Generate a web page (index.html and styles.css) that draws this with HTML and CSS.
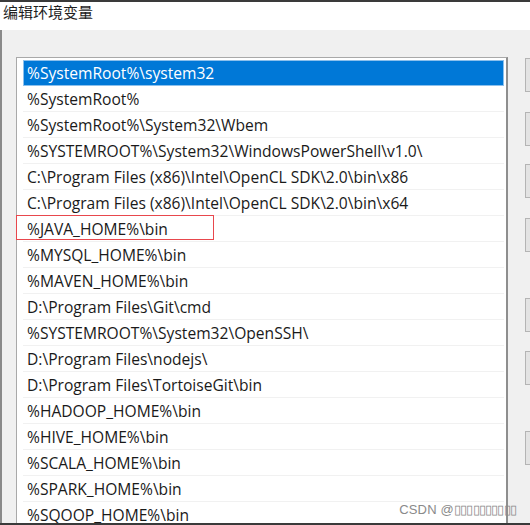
FILE: index.html
```html
<!DOCTYPE html>
<html>
<head>
<meta charset="utf-8">
<link rel="stylesheet" href="styles.css">
</head>
<body>
<div class="window">
  <div class="titlebar">编辑环境变量</div>
  <div class="content">
    <div class="listbox">
      <div class="row selected">%SystemRoot%\system32</div>
      <div class="row">%SystemRoot%</div>
      <div class="row">%SystemRoot%\System32\Wbem</div>
      <div class="row">%SYSTEMROOT%\System32\WindowsPowerShell\v1.0\</div>
      <div class="row">C:\Program Files (x86)\Intel\OpenCL SDK\2.0\bin\x86</div>
      <div class="row">C:\Program Files (x86)\Intel\OpenCL SDK\2.0\bin\x64</div>
      <div class="row marked">%JAVA_HOME%\bin</div>
      <div class="row">%MYSQL_HOME%\bin</div>
      <div class="row">%MAVEN_HOME%\bin</div>
      <div class="row">D:\Program Files\Git\cmd</div>
      <div class="row">%SYSTEMROOT%\System32\OpenSSH\</div>
      <div class="row">D:\Program Files\nodejs\</div>
      <div class="row">D:\Program Files\TortoiseGit\bin</div>
      <div class="row">%HADOOP_HOME%\bin</div>
      <div class="row">%HIVE_HOME%\bin</div>
      <div class="row">%SCALA_HOME%\bin</div>
      <div class="row">%SPARK_HOME%\bin</div>
      <div class="row">%SQOOP_HOME%\bin</div>
    </div>
    <div class="buttons">
      <div class="btn b1"></div>
      <div class="btn b2"></div>
      <div class="btn b3"></div>
      <div class="btn b4"></div>
      <div class="btn b5"></div>
      <div class="btn b6"></div>
      <div class="btn b7"></div>
    </div>
  </div>
  <div class="watermark">CSDN @<span class="tofu">▯▯▯▯▯▯▯▯▯▯</span></div>
</div>
</body>
</html>
```
FILE: styles.css
```css
html, body {
  margin: 0;
  padding: 0;
  width: 530px;
  height: 525px;
  overflow: hidden;
  background: #f0f0f0;
}
.window {
  position: relative;
  width: 530px;
  height: 525px;
  box-sizing: border-box;
  border-top: 2px solid #3a3a3a;
  border-bottom: 2px solid #3a3a3a;
  display: flex;
  flex-direction: column;
  overflow: hidden;
}
.titlebar {
  height: 28px;
  flex: none;
  background: #ffffff;
  font-family: "Noto Sans CJK SC", sans-serif;
  font-size: 15px;
  line-height: 20px;
  color: #1e1e1e;
  padding-left: 3px;
  box-sizing: border-box;
}
.content {
  flex: 1;
  display: flex;
  align-items: flex-start;
  gap: 17px;
  padding: 27px 0 0 14px;
  border-left: 2px solid #8a8a8a;
  min-height: 0;
  background: #f0f0f0;
}
.listbox {
  width: 492px;
  flex: none;
  height: 480px;
  box-sizing: border-box;
  border: 1px solid #a9a9a9;
  border-right: 2px solid #8e8e8e;
  background: #ffffff;
  padding: 2px 2px 0 6px;
  font-family: "Open Sans", sans-serif;
  font-size: 15.6px;
  color: #1a1a1a;
}
.row {
  height: 26px;
  line-height: 26px;
  box-sizing: border-box;
  padding-left: 4px;
  border-bottom: 1px solid #f1f1f1;
  white-space: nowrap;
  position: relative;
}
.row.selected {
  background: #0078d7;
  color: #ffffff;
  border: 1px solid #8cc0ec;
  padding-left: 3px;
  line-height: 24px;
}
.row.marked::after {
  content: "";
  position: absolute;
  left: -7px;
  top: -1px;
  width: 198px;
  height: 25px;
  border: 1px solid #e8474d;
  box-sizing: border-box;
}
.buttons {
  display: flex;
  flex-direction: column;
  flex: none;
  padding-top: 1px;
}
.btn {
  width: 40px;
  height: 34px;
  box-sizing: border-box;
  border: 1px solid #b4b4b4;
  background: #e3e3e3;
}
.b2 { margin-top: 20px; }
.b3 { margin-top: 18px; }
.b4 { margin-top: 20px; }
.b5 { margin-top: 46px; }
.b6 { margin-top: 19px; }
.b7 { margin-top: 46px; }
.watermark {
  position: absolute;
  right: 14px;
  bottom: 6px;
  font-family: "Liberation Sans", sans-serif;
  font-size: 13px;
  color: #8a8a8a;
  letter-spacing: 0.2px;
}
.tofu {
  letter-spacing: -0.8px;
}
```
